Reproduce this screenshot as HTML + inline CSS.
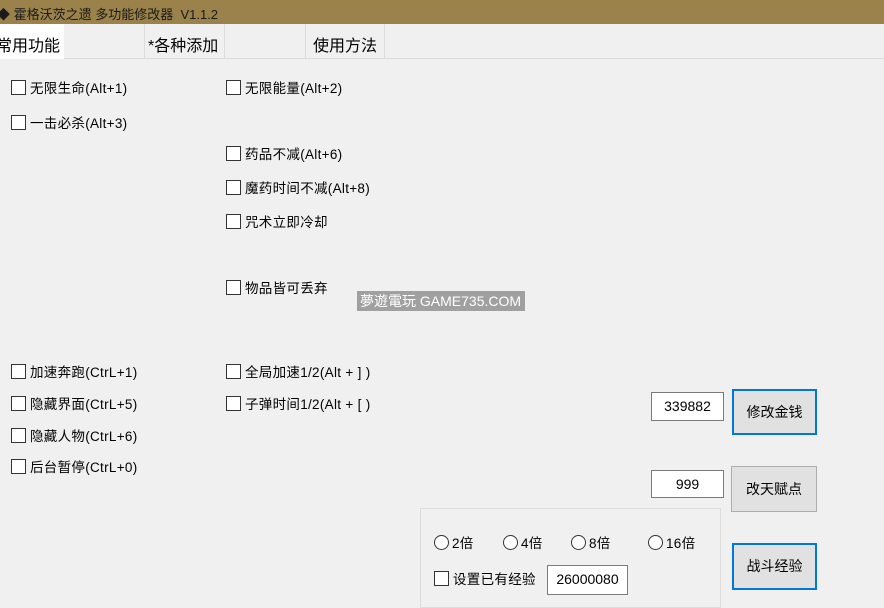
<!DOCTYPE html>
<html><head><meta charset="utf-8"><style>
*{margin:0;padding:0;box-sizing:border-box}
body{width:884px;height:603px;background:#f0f0f0;position:relative;overflow:hidden;font-family:"Liberation Sans","Noto Sans CJK SC",sans-serif;font-size:13.5px;color:#000}
.a{position:absolute;white-space:nowrap}
.cb{position:absolute;white-space:nowrap;line-height:16px;letter-spacing:0.3px}
.cb:before{content:"";display:inline-block;width:13px;height:13px;border:1px solid #333;background:#fff;vertical-align:-2px;margin-right:4px}
.rb{position:absolute;white-space:nowrap;line-height:16px;letter-spacing:0.3px}
.rb:before{content:"";display:inline-block;width:13px;height:13px;border:1px solid #333;border-radius:50%;background:#fff;vertical-align:-2px;margin-right:3px}
.tb{position:absolute;background:#fff;border:1px solid #7a7a7a;text-align:center;font-size:14px;line-height:26px}
.bt{position:absolute;background:#e1e1e1;border:1px solid #adadad;text-align:center;font-size:14px}
.bt.f{border:2px solid #0078d7}
</style></head><body>
<div class="a" style="left:0;top:0;width:884px;height:24px;background:#9a824a"></div>
<div class="a" style="left:-3px;top:4px;font-size:13px;color:#1a1a1a">◆ 霍格沃茨之遗 多功能修改器&nbsp; V1.1.2</div>
<div class="a" style="left:0;top:24px;width:884px;height:35px;background:#f0f0f0;border-bottom:1px solid #dcdcdc"></div>
<div class="a" style="left:0;top:24px;width:64px;height:35px;background:#fff"></div>
<div class="a" style="left:-4px;top:32px;font-size:16px">常用功能</div>
<div class="a" style="left:144px;top:24px;width:81px;height:35px;border-left:1px solid #dcdcdc;border-right:1px solid #dcdcdc"></div>
<div class="a" style="left:148px;top:32px;font-size:16px">*各种添加</div>
<div class="a" style="left:305px;top:24px;width:80px;height:35px;border-left:1px solid #dcdcdc;border-right:1px solid #dcdcdc"></div>
<div class="a" style="left:313px;top:32px;font-size:16px">使用方法</div>

<div class="cb" style="left:11px;top:80px">无限生命(Alt+1)</div>
<div class="cb" style="left:11px;top:115px">一击必杀(Alt+3)</div>
<div class="cb" style="left:226px;top:80px">无限能量(Alt+2)</div>
<div class="cb" style="left:226px;top:146px">药品不减(Alt+6)</div>
<div class="cb" style="left:226px;top:180px">魔药时间不减(Alt+8)</div>
<div class="cb" style="left:226px;top:214px">咒术立即冷却</div>
<div class="cb" style="left:226px;top:280px">物品皆可丢弃</div>
<div class="a" style="left:357px;top:291px;width:168px;height:20px;background:#a0a0a0;color:#fff;font-size:14px;line-height:20px;padding-left:3px">夢遊電玩 GAME735.COM</div>

<div class="cb" style="left:11px;top:364px">加速奔跑(CtrL+1)</div>
<div class="cb" style="left:11px;top:396px">隐藏界面(CtrL+5)</div>
<div class="cb" style="left:11px;top:428px">隐藏人物(CtrL+6)</div>
<div class="cb" style="left:11px;top:459px">后台暂停(CtrL+0)</div>
<div class="cb" style="left:226px;top:364px">全局加速1/2(Alt + ] )</div>
<div class="cb" style="left:226px;top:396px">子弹时间1/2(Alt + [ )</div>

<div class="tb" style="left:651px;top:392px;width:73px;height:29px">339882</div>
<div class="bt f" style="left:732px;top:389px;width:85px;height:46px;line-height:42px">修改金钱</div>
<div class="tb" style="left:651px;top:470px;width:73px;height:28px">999</div>
<div class="bt" style="left:731px;top:466px;width:86px;height:46px;line-height:44px">改天赋点</div>
<div class="a" style="left:420px;top:508px;width:301px;height:100px;border:1px solid #dcdcdc"></div>
<div class="rb" style="left:434px;top:535px">2倍</div>
<div class="rb" style="left:503px;top:535px">4倍</div>
<div class="rb" style="left:571px;top:535px">8倍</div>
<div class="rb" style="left:648px;top:535px">16倍</div>
<div class="cb" style="left:434px;top:571px">设置已有经验</div>
<div class="tb" style="left:547px;top:565px;width:81px;height:30px">26000080</div>
<div class="bt f" style="left:732px;top:543px;width:85px;height:47px;line-height:43px">战斗经验</div>
</body></html>
